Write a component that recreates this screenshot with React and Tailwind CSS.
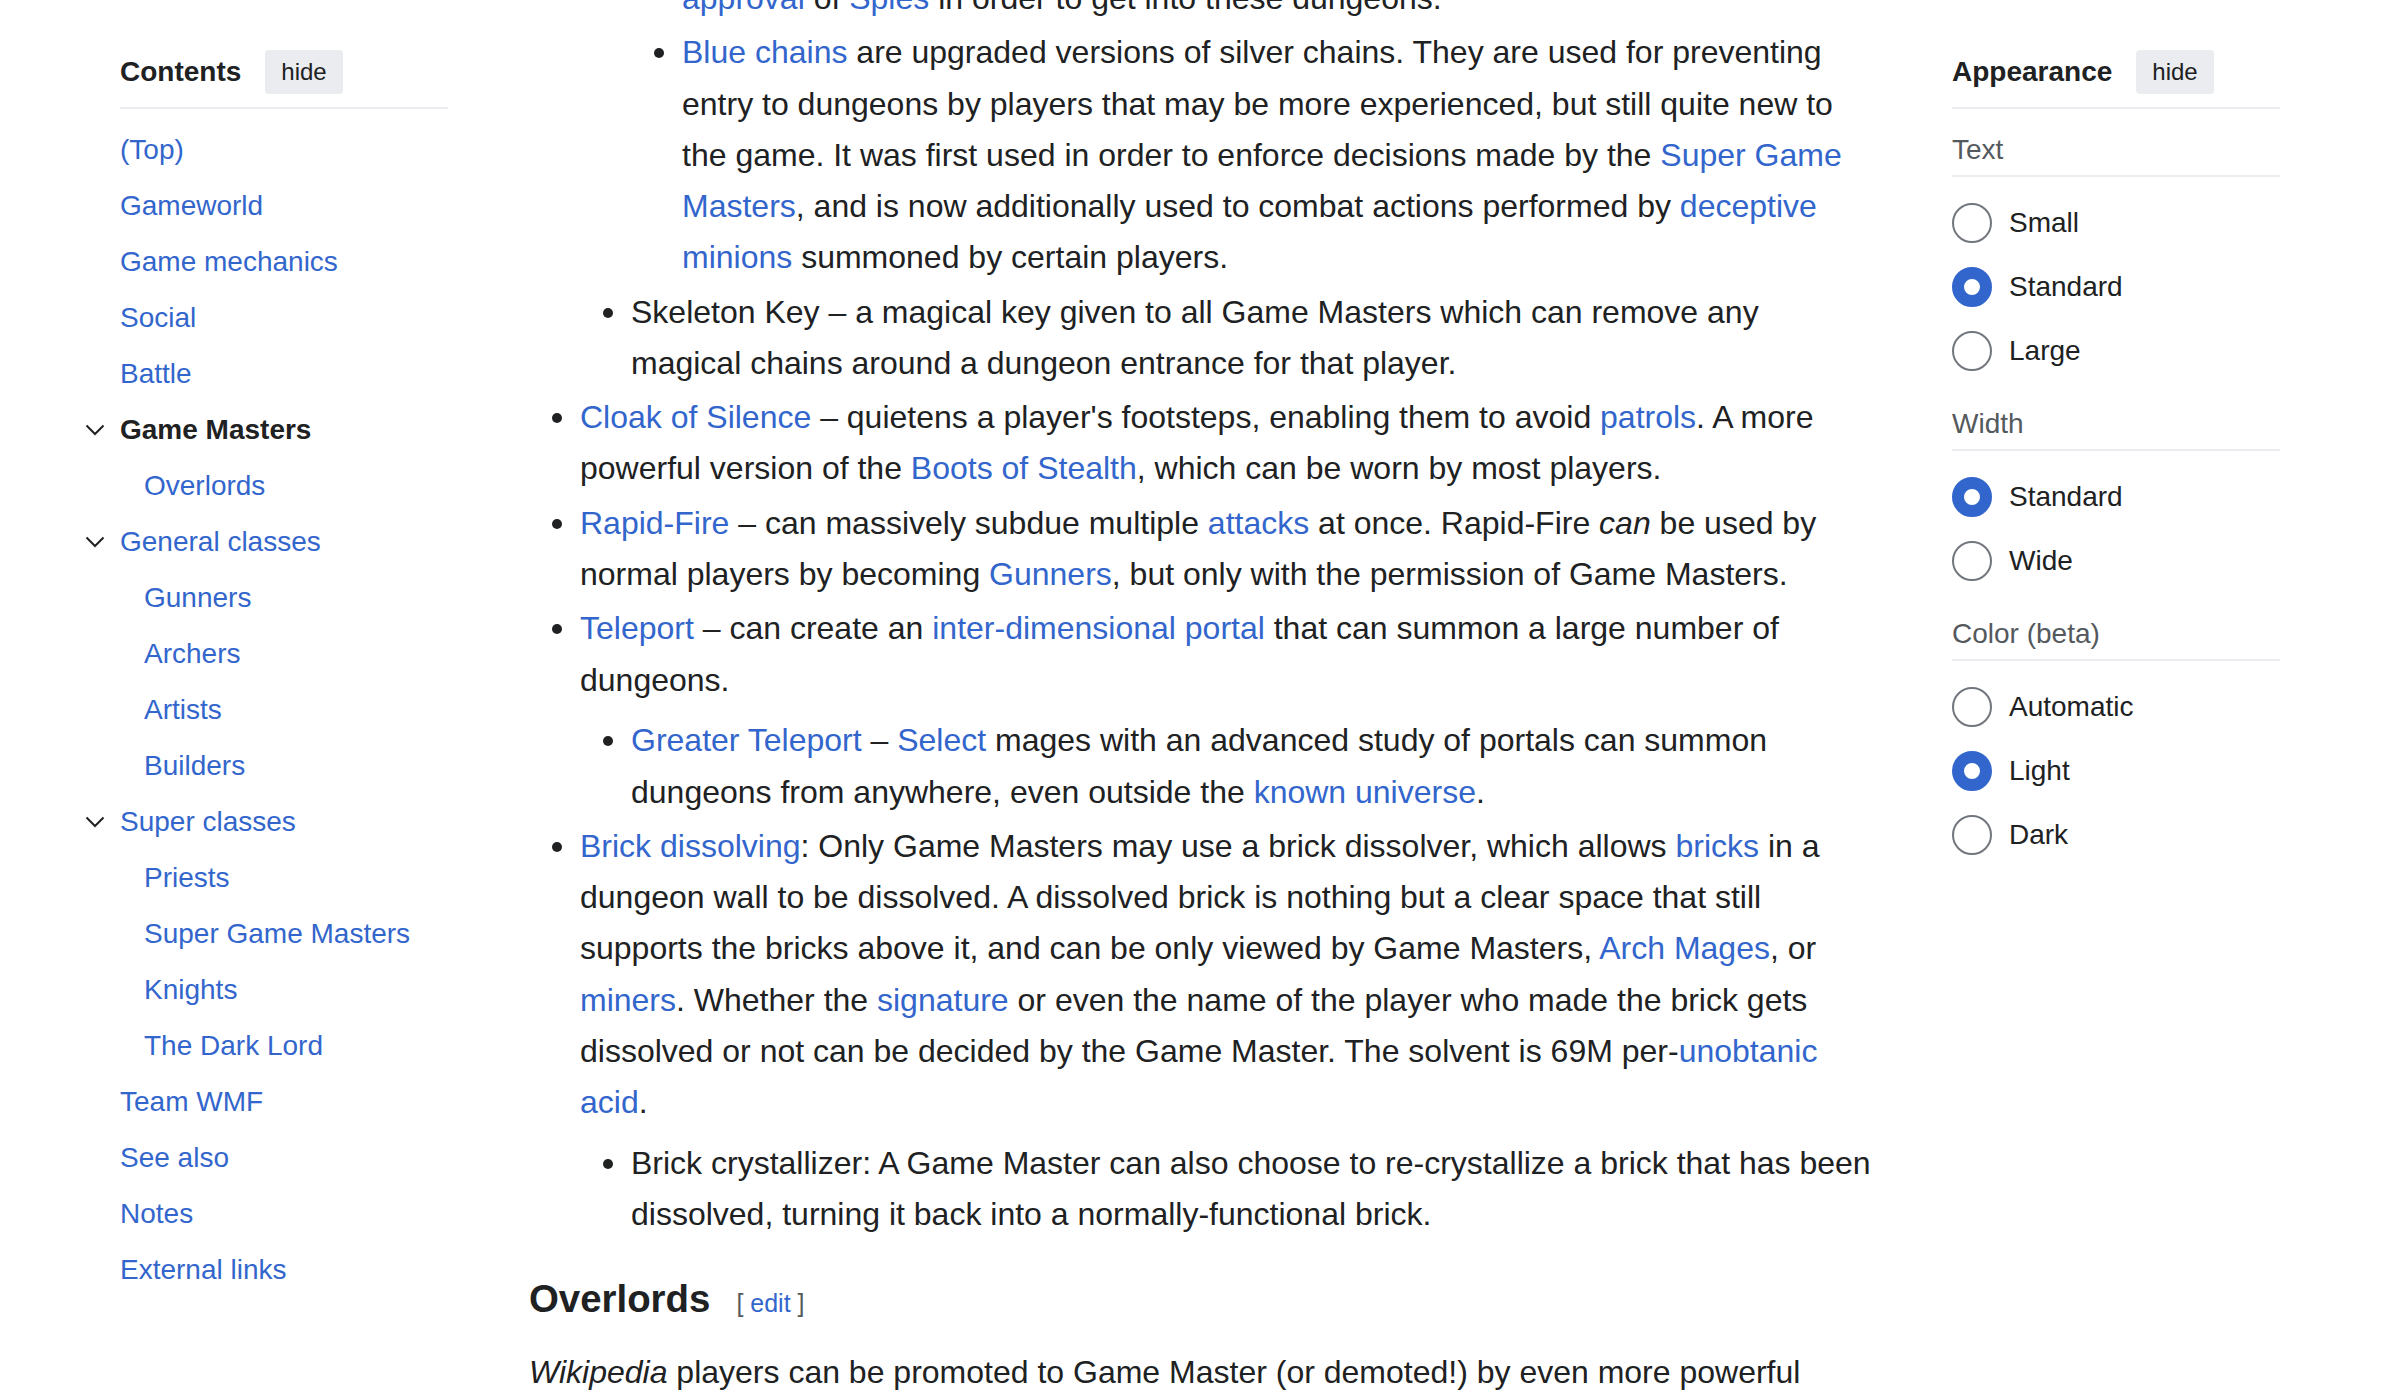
import React from 'react';

const toc = [
  { name: '(Top)' },
  { name: 'Gameworld' },
  { name: 'Game mechanics' },
  { name: 'Social' },
  { name: 'Battle' },
  { name: 'Game Masters', toggle: true, active: true },
  { name: 'Overlords', sub: true },
  { name: 'General classes', toggle: true },
  { name: 'Gunners', sub: true },
  { name: 'Archers', sub: true },
  { name: 'Artists', sub: true },
  { name: 'Builders', sub: true },
  { name: 'Super classes', toggle: true },
  { name: 'Priests', sub: true },
  { name: 'Super Game Masters', sub: true },
  { name: 'Knights', sub: true },
  { name: 'The Dark Lord', sub: true },
  { name: 'Team WMF' },
  { name: 'See also' },
  { name: 'Notes' },
  { name: 'External links' },
];

const appearance = [
  { title: 'Text', options: ['Small', 'Standard', 'Large'], selected: 'Standard' },
  { title: 'Width', options: ['Standard', 'Wide'], selected: 'Standard' },
  { title: 'Color (beta)', options: ['Automatic', 'Light', 'Dark'], selected: 'Light' },
];

const A = ({ children }) => (
  <a href="#" className="text-[#3366cc]">{children}</a>
);

// list item with the vector-style round bullet; cont = item started above the fold
const Li = ({ children, cont }) => (
  <li
    className={
      cont
        ? 'relative mb-[3.2px]'
        : "relative mb-[3.2px] before:absolute before:left-[-28px] before:top-[21px] before:h-[10px] before:w-[10px] before:rounded-full before:bg-[#202122] before:content-['']"
    }
  >
    {children}
  </li>
);

const Chevron = () => (
  <svg width="20" height="12" viewBox="0 0 20 12" fill="none">
    <polyline points="1.5,1.5 10,10 18.5,1.5" stroke="#202122" strokeWidth="2" />
  </svg>
);

const HideButton = () => (
  <button className="ml-[24px] h-[44px] rounded-[4px] bg-[#eaecf0] px-[16px] text-[24px] text-[#202122]">
    hide
  </button>
);

const Contents = () => (
  <nav className="ml-[120px] w-[328px] shrink-0 pt-[50px]">
    <div className="flex items-center border-b-2 border-[#eaecf0] pb-[13px]">
      <h2 className="text-[28px] font-bold text-[#202122]">Contents</h2>
      <HideButton />
    </div>
    <ul className="mt-[13px]">
      {toc.map((item) => (
        <li
          key={item.name}
          className={item.sub ? 'flex h-[56px] items-center pl-[24px]' : 'flex h-[56px] items-center'}
        >
          {item.toggle && (
            <span className="ml-[-35px] mr-[15px] flex w-[20px] items-center">
              <Chevron />
            </span>
          )}
          <a
            href="#"
            className={item.active ? 'text-[28px] font-bold text-[#202122]' : 'text-[28px] text-[#3366cc]'}
          >
            {item.name}
          </a>
        </li>
      ))}
    </ul>
  </nav>
);

const Appearance = () => (
  <aside className="ml-[79px] w-[328px] shrink-0 pt-[50px]">
    <div className="flex items-center border-b-2 border-[#eaecf0] pb-[13px]">
      <h2 className="text-[28px] font-bold text-[#202122]">Appearance</h2>
      <HideButton />
    </div>
    {appearance.map((group) => (
      <div key={group.title} className="pt-[18px]">
        <div className="flex h-[50px] items-start border-b-2 border-[#eaecf0] pt-[1px] text-[28px] leading-[44px] text-[#54595d]">
          {group.title}
        </div>
        <div className="mt-[14px]">
          {group.options.map((opt) => (
            <label key={opt} className="flex h-[64px] items-center">
              <span
                className={
                  opt === group.selected
                    ? 'h-[40px] w-[40px] rounded-full border-[12px] border-[#3366cc] bg-white'
                    : 'h-[40px] w-[40px] rounded-full border-2 border-[#72777d] bg-white'
                }
              />
              <span className="ml-[17px] text-[28px] text-[#202122]">{opt}</span>
            </label>
          ))}
        </div>
      </div>
    ))}
  </aside>
);

const Article = () => (
  <main className="ml-[81px] w-[1344px] shrink-0 text-[32px] leading-[51.2px] text-[#202122]">
    <div className="mt-[-27px] whitespace-nowrap">
      <ul className="ml-[51px]">
        <Li cont>
          <ul className="ml-[51px]">
            <Li cont>
              <ul className="ml-[51px]">
                <Li cont>
                  <A>approval</A> of <A>Spies</A> in order to get into these dungeons.
                </Li>
                <Li>
                  <A>Blue chains</A> are upgraded versions of silver chains. They are used for preventing
                  <br />
                  entry to dungeons by players that may be more experienced, but still quite new to
                  <br />
                  the game. It was first used in order to enforce decisions made by the <A>Super Game</A>
                  <br />
                  <A>Masters</A>, and is now additionally used to combat actions performed by <A>deceptive</A>
                  <br />
                  <A>minions</A> summoned by certain players.
                </Li>
              </ul>
            </Li>
            <Li>
              Skeleton Key – a magical key given to all Game Masters which can remove any
              <br />
              magical chains around a dungeon entrance for that player.
            </Li>
          </ul>
        </Li>
        <Li>
          <A>Cloak of Silence</A> – quietens a player's footsteps, enabling them to avoid <A>patrols</A>. A more
          <br />
          powerful version of the <A>Boots of Stealth</A>, which can be worn by most players.
        </Li>
        <Li>
          <A>Rapid-Fire</A> – can massively subdue multiple <A>attacks</A> at once. Rapid-Fire <i>can</i> be used by
          <br />
          normal players by becoming <A>Gunners</A>, but only with the permission of Game Masters.
        </Li>
        <Li>
          <A>Teleport</A> – can create an <A>inter-dimensional portal</A> that can summon a large number of
          <br />
          dungeons.
          <ul className="ml-[51px] mt-[9.6px]">
            <Li>
              <A>Greater Teleport</A> – <A>Select</A> mages with an advanced study of portals can summon
              <br />
              dungeons from anywhere, even outside the <A>known universe</A>.
            </Li>
          </ul>
        </Li>
        <Li>
          <A>Brick dissolving</A>: Only Game Masters may use a brick dissolver, which allows <A>bricks</A> in a
          <br />
          dungeon wall to be dissolved. A dissolved brick is nothing but a clear space that still
          <br />
          supports the bricks above it, and can be only viewed by Game Masters, <A>Arch Mages</A>, or
          <br />
          <A>miners</A>. Whether the <A>signature</A> or even the name of the player who made the brick gets
          <br />
          dissolved or not can be decided by the Game Master. The solvent is 69M per-<A>unobtanic</A>
          <br />
          <A>acid</A>.
          <ul className="ml-[51px] mt-[9.6px]">
            <Li>
              Brick crystallizer: A Game Master can also choose to re-crystallize a brick that has been
              <br />
              dissolved, turning it back into a normally-functional brick.
            </Li>
          </ul>
        </Li>
      </ul>
      <h3 className="mt-[28px] text-[38.4px] font-bold leading-[61px]">
        Overlords
        <span className="ml-[26px] text-[25px] font-normal text-[#54595d]">
          [ <A>edit</A> ]
        </span>
      </h3>
      <p className="mt-[13px]">
        <i>Wikipedia</i> players can be promoted to Game Master (or demoted!) by even more powerful
      </p>
    </div>
  </main>
);

export default function App() {
  return (
    <div className="flex h-[1398px] w-[2400px] overflow-hidden bg-white font-['Liberation_Sans',Arial,sans-serif]">
      <Contents />
      <Article />
      <Appearance />
    </div>
  );
}
